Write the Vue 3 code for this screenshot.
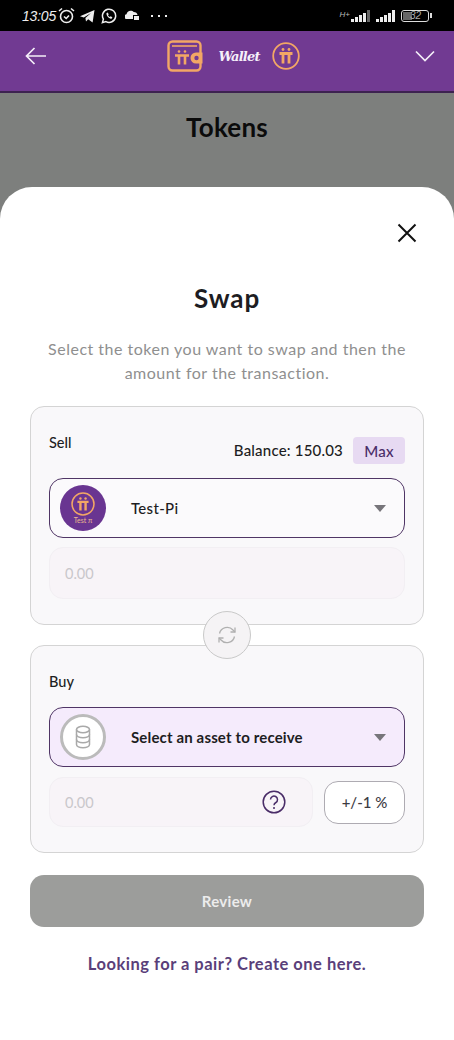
<template>
  <div class="page">
    <div class="status-bar">
      <div class="status-left">
        <span class="time">13:05</span>
        <svg class="alarm" width="17" height="17" viewBox="0 0 17 17" fill="none" stroke="#eee" stroke-width="1.600">
          <circle cx="8.500" cy="9.500" r="6" />
          <path d="M6 9.500l2.200 2 2.800-3" />
          <path d="M1 4l3-2.500M16 4l-3-2.500" />
        </svg>
        <svg class="tg" width="15" height="14" viewBox="0 0 15 14" fill="#eee">
          <path d="M0 7.200L14.500 1 12.600 13.400 8.200 10.200 6 12.600 5.400 9 11 4 3.800 8.400z" />
        </svg>
        <svg width="16" height="16" viewBox="0 0 16 16" fill="none" stroke="#eee" stroke-width="1.500">
          <path d="M1.400 14.600l1-3.400a6.600 6.600 0 1 1 2.500 2.400z" />
          <path d="M5.400 5.200c0 3 2.500 5.400 5.200 5.600l.8-1.600-1.800-.9-.8.700c-.8-.4-1.400-1-1.800-1.800l.7-.8-.9-1.800z" fill="#eee" stroke="none" />
        </svg>
        <svg class="cloud" width="14" height="11" viewBox="0 0 14 11" fill="#eee">
          <path d="M1 9a2.500 2.500 0 0 1 .5-4.800C2 2 3.500.8 5.500.8c1.600 0 2.500.4 3.200 1.200 2 0 3.600 1 3.800 3H8v4z" />
          <rect x="9" y="6" width="5" height="4" />
        </svg>
        <span class="dots"><i></i><i></i><i></i></span>
      </div>
      <div class="status-right">
        <div class="net">
          <span class="net-type">H+</span>
          <span class="bars">
            <i v-for="(h, i) in [3, 5, 7, 9, 12]" :key="i" :class="{ off: i === 4 }" :style="{ height: h + 'px' }"></i>
          </span>
        </div>
        <span class="bars">
          <i v-for="(h, i) in [3, 5, 7, 9, 12]" :key="i" :style="{ height: h + 'px' }"></i>
        </span>
        <div class="battery"><span class="level"></span><span class="pct">32</span></div>
        <span class="nub"></span>
      </div>
    </div>

    <header class="top-bar">
      <svg width="22" height="18" viewBox="0 0 22 18" fill="none" stroke="#f4eef8" stroke-width="1.700">
        <path d="M21 9H1.500M9.500 1L1.500 9l8 8" />
      </svg>
      <div class="brand">
        <svg width="36" height="32" viewBox="0 0 36 32" fill="none" stroke="#f2a765" stroke-width="2.400">
          <rect x="1.500" y="1.500" width="32" height="29" rx="4" />
          <path d="M5 6h25" stroke-width="1.600" />
          <path d="M8 15.500h14M12 15.500v9M18 15.500v9" stroke-width="2.600" />
          <circle cx="12" cy="11.500" r="1.300" fill="#f2a765" stroke="none" />
          <circle cx="18" cy="11.500" r="1.300" fill="#f2a765" stroke="none" />
          <path d="M35.500 12.500h-6.500a5.500 5.500 0 0 0 0 11h6.500z" fill="#f2a765" stroke="none" />
          <circle cx="29.500" cy="18" r="2.200" fill="#713a92" stroke="none" />
        </svg>
        <span class="brand-name">Wallet</span>
        <svg width="28" height="28" viewBox="0 0 28 28" fill="none" stroke="#f2a765" stroke-width="1.800">
          <circle cx="14" cy="14" r="12.800" />
          <path d="M7.500 11.500h13M11 11.500v10M17 11.500v10" stroke-width="2.800" />
          <circle cx="11" cy="7.500" r="1.400" fill="#f2a765" stroke="none" />
          <circle cx="17" cy="7.500" r="1.400" fill="#f2a765" stroke="none" />
        </svg>
      </div>
      <svg width="20" height="12" viewBox="0 0 20 12" fill="none" stroke="#f4eef8" stroke-width="1.700">
        <path d="M1 1.500l9 9 9-9" />
      </svg>
    </header>

    <div class="backdrop">
      <h1>Tokens</h1>
    </div>

    <section class="sheet">
      <div class="close-row">
        <svg width="20" height="20" viewBox="0 0 20 20" stroke="#111" stroke-width="2">
          <path d="M1.500 1.500l17 17M18.500 1.500l-17 17" />
        </svg>
      </div>
      <h2>Swap</h2>
      <p class="intro">Select the token you want to swap and then the amount for the transaction.</p>

      <div class="cards">
        <div class="card">
          <div class="card-head">
            <span class="label">Sell</span>
            <div class="balance">
              <span class="balance-text">Balance: 150.03</span>
              <button class="max">Max</button>
            </div>
          </div>
          <div class="select">
            <div class="token">
              <svg width="24" height="24" viewBox="0 0 28 28" fill="none" stroke="#f2a765" stroke-width="1.800">
                <circle cx="14" cy="14" r="12.800" />
                <path d="M7.500 11.500h13M11 11.500v10M17 11.500v10" stroke-width="2.800" />
                <circle cx="11" cy="7.500" r="1.400" fill="#f2a765" stroke="none" />
                <circle cx="17" cy="7.500" r="1.400" fill="#f2a765" stroke="none" />
              </svg>
              <span>Test π</span>
            </div>
            <span class="select-text">Test-Pi</span>
            <span class="caret"></span>
          </div>
          <div class="amount">0.00</div>
        </div>

        <div class="card">
          <div class="card-head">
            <span class="label">Buy</span>
          </div>
          <div class="select tinted">
            <div class="token empty">
              <svg width="16" height="24" viewBox="0 0 16 24" fill="none" stroke="#a9a9a9" stroke-width="1.500">
                <ellipse cx="8" cy="4.500" rx="6.500" ry="3.200" />
                <path d="M1.500 4.500v15c0 1.800 2.900 3.200 6.500 3.200s6.500-1.400 6.500-3.200v-15" />
                <path d="M1.500 9.500c0 1.800 2.900 3.200 6.500 3.200s6.500-1.400 6.500-3.200M1.500 14.500c0 1.800 2.900 3.200 6.500 3.200s6.500-1.400 6.500-3.200" />
              </svg>
            </div>
            <span class="select-text strong">Select an asset to receive</span>
            <span class="caret"></span>
          </div>
          <div class="amount-row">
            <div class="amount small">
              <span>0.00</span>
              <svg width="24" height="24" viewBox="0 0 24 24" fill="none" stroke="#4a2d68" stroke-width="1.500">
                <circle cx="12" cy="12" r="10.800" />
                <path d="M8.500 9.500a3.500 3.500 0 1 1 5.400 3c-1.300.8-1.900 1.300-1.900 2.700" />
                <circle cx="12" cy="18" r="1" fill="#4a2d68" stroke="none" />
              </svg>
            </div>
            <button class="slippage">+/-1 %</button>
          </div>
        </div>

        <div class="swap-toggle">
          <svg width="20" height="20" viewBox="0 0 20 20" fill="none" stroke="#b0b0b0" stroke-width="1.300">
            <path d="M2.500 8.500a7.800 7.800 0 0 1 13.500-3.500L18 7" />
            <path d="M17.500 11.500a7.800 7.800 0 0 1-13.500 3.500L2 13" />
            <path d="M18 2.500V7h-4.500M2 17.500V13h4.500" />
          </svg>
        </div>
      </div>

      <button class="review">Review</button>
      <a class="pair-link">Looking for a pair? Create one here.</a>
    </section>
  </div>
</template>

<script setup>
</script>

<style>
html,
body {
  margin: 0;
  background: #7d7f7d;
}
</style>

<style scoped>
.page {
  width: 454px;
  height: 1040px;
  overflow: hidden;
  font-family: "Lato", "Noto Sans", sans-serif;
  color: #1d1d22;
}
.status-bar {
  height: 31px;
  background: #000;
  display: flex;
  justify-content: space-between;
  align-items: center;
  padding: 0 22px;
  box-sizing: border-box;
  color: #eee;
}
.status-left {
  display: flex;
  align-items: center;
  gap: 5px;
}
.time {
  font: italic 14px "Liberation Sans", sans-serif;
  letter-spacing: -0.2px;
}
.alarm {
  margin-left: -3px;
}
.tg {
  margin-right: 1px;
}
.cloud {
  margin-left: 3px;
}
.dots {
  display: flex;
  gap: 5px;
  margin-left: 7px;
}
.dots i {
  width: 2px;
  height: 2px;
  background: #eee;
}
.status-right {
  display: flex;
  align-items: center;
  gap: 6px;
}
.net {
  display: flex;
  align-items: flex-end;
  gap: 1px;
}
.net-type {
  font: italic 8px "Liberation Sans", sans-serif;
  color: #bbb;
  align-self: flex-start;
}
.bars {
  display: flex;
  align-items: flex-end;
  gap: 1px;
}
.bars i {
  width: 3px;
  background: #eee;
}
.bars i.off {
  background: #666;
}
.battery {
  position: relative;
  width: 28px;
  height: 12px;
  border: 1px solid #ddd;
  border-radius: 3px;
  box-sizing: border-box;
}
.level {
  position: absolute;
  left: 1px;
  top: 1px;
  bottom: 1px;
  width: 9px;
  background: #666;
}
.pct {
  position: absolute;
  left: 8px;
  top: -1px;
  font: italic 10px/12px "Liberation Sans", sans-serif;
  color: #aaa;
}
.nub {
  width: 2px;
  height: 5px;
  background: #ddd;
  margin-left: -5px;
}
.top-bar {
  height: 62px;
  box-sizing: border-box;
  background: #713a92;
  border-bottom: 2px solid #3d2250;
  display: flex;
  justify-content: space-between;
  align-items: center;
  padding: 0 19px 10px 25px;
}
.brand {
  display: flex;
  align-items: center;
  margin-left: 5px;
}
.brand-name {
  font: italic bold 13px "DejaVu Serif", serif;
  color: #f6f0fa;
  margin: 0 12px 0 15px;
  letter-spacing: -0.8px;
}
.backdrop {
  height: 94px;
  background: #7d7f7d;
  text-align: center;
}
.backdrop h1 {
  margin: 0;
  padding-top: 19px;
  font-size: 26px;
  line-height: 30px;
  font-weight: 700;
  color: #0b0b0b;
  letter-spacing: 0.2px;
}
.sheet {
  height: 853px;
  box-sizing: border-box;
  background: #fff;
  border-radius: 32px 32px 0 0;
  padding: 36px 30px 0;
  text-align: center;
}
.close-row {
  display: flex;
  justify-content: flex-end;
  padding-right: 7px;
  height: 20px;
}
.sheet h2 {
  margin: 40px 0 0;
  font-size: 26px;
  line-height: 30px;
  font-weight: 700;
  letter-spacing: 0.9px;
}
.intro {
  margin: 24px 10px 0;
  font-size: 16px;
  line-height: 24px;
  color: #8f8f8f;
  letter-spacing: 0.5px;
}
.cards {
  position: relative;
  margin-top: 21px;
  display: flex;
  flex-direction: column;
  gap: 20px;
}
.card {
  background: #f9f8fa;
  border: 1px solid #d4d4d4;
  border-radius: 14px;
  padding: 26px 18px 25px;
  text-align: left;
}
.card-head {
  display: flex;
  justify-content: space-between;
  align-items: flex-start;
}
.label {
  font-size: 14.500px;
  line-height: 20px;
  font-weight: 500;
}
.balance {
  margin-top: 4px;
  display: flex;
  align-items: center;
  gap: 10px;
  font-size: 15px;
  font-weight: 500;
  letter-spacing: 0.2px;
}
.balance-text {
  padding-bottom: 2px;
}
.max {
  width: 52px;
  height: 27px;
  border: none;
  border-radius: 4px;
  background: #e7daf2;
  color: #4a2d68;
  font: 500 15px "Lato", sans-serif;
  letter-spacing: 0.3px;
  padding: 0;
}
.select {
  margin-top: 14px;
  height: 60px;
  box-sizing: border-box;
  border: 1.500px solid #4f3565;
  border-radius: 14px;
  background: #fbfafc;
  display: flex;
  align-items: center;
  padding: 0 18px 0 10px;
}
.card:nth-child(2) .select {
  margin-top: 15px;
}
.select.tinted {
  background: #f5ebfc;
}
.token {
  width: 46px;
  height: 46px;
  border-radius: 50%;
  background: #693591;
  display: flex;
  flex-direction: column;
  align-items: center;
  justify-content: center;
  flex-shrink: 0;
  padding-top: 1px;
  box-sizing: border-box;
}
.token span {
  font-size: 7px;
  line-height: 9px;
  color: #e9b98f;
}
.token.empty {
  background: #fff;
  border: 3px solid #bbb;
  padding: 0;
}
.select-text {
  margin-left: 25px;
  font-size: 15px;
  font-weight: 500;
  letter-spacing: 0.3px;
  flex: 1;
}
.select-text.strong {
  font-weight: 700;
  letter-spacing: 0.15px;
}
.caret {
  width: 0;
  height: 0;
  border-left: 6.500px solid transparent;
  border-right: 6.500px solid transparent;
  border-top: 7px solid #77757a;
}
.amount {
  margin-top: 9px;
  height: 52px;
  box-sizing: border-box;
  border: 1px solid #f2eff3;
  border-radius: 14px;
  background: #f8f4f8;
  padding: 0 15px;
  display: flex;
  align-items: center;
  font-size: 14.500px;
  color: #c9c7cb;
}
.amount-row {
  margin-top: 10px;
  display: flex;
  align-items: center;
  gap: 11px;
}
.amount.small {
  margin-top: 0;
  height: 50px;
  flex: 1;
  justify-content: space-between;
  padding-right: 26px;
}
.slippage {
  width: 81px;
  height: 43px;
  border: 1px solid #aeabb2;
  border-radius: 14px;
  background: #fff;
  color: #3c3a42;
  font: 500 15px "Lato", sans-serif;
  padding: 0;
}
.swap-toggle {
  position: absolute;
  left: 173px;
  top: 205px;
  width: 48px;
  height: 48px;
  box-sizing: border-box;
  border-radius: 50%;
  border: 1px solid #c9c9c9;
  background: #f5f3f5;
  display: flex;
  align-items: center;
  justify-content: center;
}
.review {
  display: block;
  width: 100%;
  height: 52px;
  margin-top: 22px;
  border: none;
  border-radius: 14px;
  background: #9c9d9b;
  color: #ececec;
  font: 700 15px "Lato", sans-serif;
  letter-spacing: 0.3px;
}
.pair-link {
  display: block;
  margin-top: 25px;
  font-size: 16.500px;
  line-height: 24px;
  font-weight: 700;
  color: #5a3f7a;
  letter-spacing: 0.5px;
}
</style>
